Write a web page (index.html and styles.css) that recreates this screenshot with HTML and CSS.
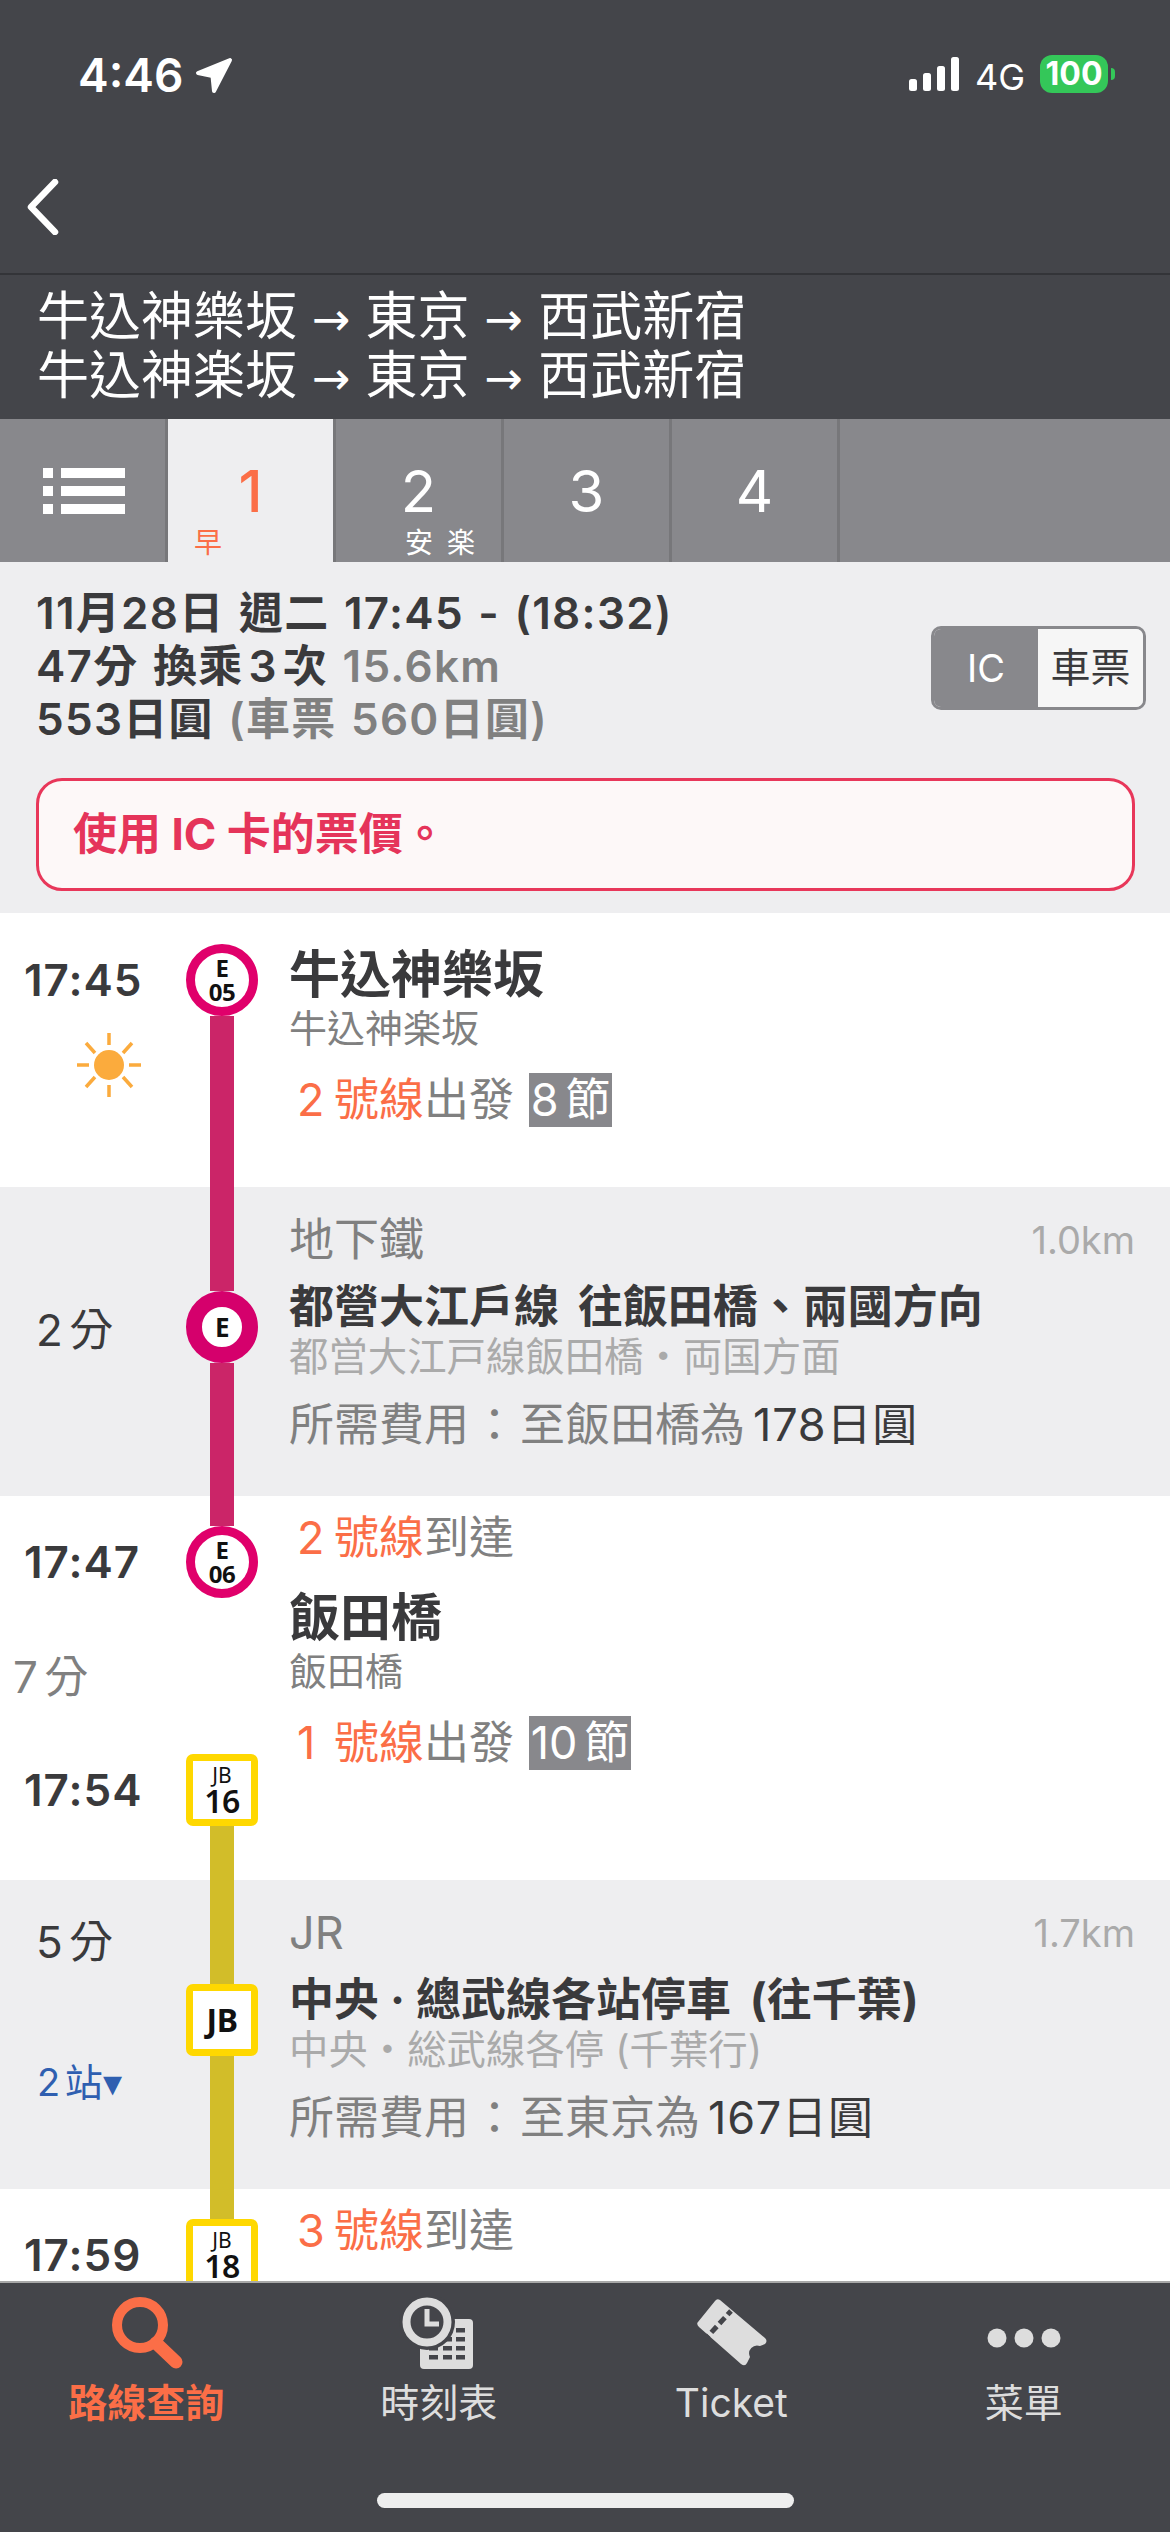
FILE: index.html
```html
<!DOCTYPE html>
<html lang="zh-Hant">
<head>
  <meta charset="UTF-8" />
  <title>路線查詢</title>
  <link rel="stylesheet" href="styles.css">
</head>
<body>
  <header class="top">
    <div class="status">
      <div class="status-time">
        <span>4:46</span>
        <svg class="loc-arrow" width="38" height="38" viewBox="0 0 38 38"><path d="M35 3L3 16L17.5 19L19 34Z" fill="#fff" stroke="#fff" stroke-width="4" stroke-linejoin="round"/></svg>
      </div>
      <div class="status-right">
        <svg width="50" height="34" viewBox="0 0 50 34"><rect x="0" y="22" width="8" height="12" rx="2.5" fill="#fff"/><rect x="14" y="16" width="8" height="18" rx="2.5" fill="#fff"/><rect x="28" y="9" width="8" height="25" rx="2.5" fill="#fff"/><rect x="42" y="0" width="8" height="34" rx="2.5" fill="#fff"/></svg>
        <span class="net">4G</span>
        <span class="battery">100</span>
        <span class="battery-nub"></span>
      </div>
    </div>
    <div class="nav">
      <svg width="40" height="56" viewBox="0 0 40 56"><path d="M31 3L7 28L31 53" fill="none" stroke="#fff" stroke-width="6.5" stroke-linecap="round" stroke-linejoin="round"/></svg>
    </div>
    <div class="route">
      <div>牛込神樂坂<span class="arrow">→</span>東京<span class="arrow">→</span>西武新宿</div>
      <div>牛込神楽坂<span class="arrow">→</span>東京<span class="arrow">→</span>西武新宿</div>
    </div>
  </header>

  <nav class="tabs">
    <div class="tab tab-list">
      <svg width="82" height="46" viewBox="0 0 82 46" fill="#fff"><rect width="10" height="10"/><rect x="18" width="64" height="10"/><rect y="18" width="10" height="10"/><rect x="18" y="18" width="64" height="10"/><rect y="36" width="10" height="10"/><rect x="18" y="36" width="64" height="10"/></svg>
    </div>
    <div class="tab active">
      <span class="tab-num">1</span>
      <span class="tab-note note-early">早</span>
    </div>
    <div class="tab">
      <span class="tab-num">2</span>
      <span class="tab-note note-easy">安 楽</span>
    </div>
    <div class="tab"><span class="tab-num">3</span></div>
    <div class="tab"><span class="tab-num">4</span></div>
    <div class="tab-rest"></div>
  </nav>

  <section class="summary">
    <div class="summary-top">
      <div class="summary-text">
        <div>11月28日 週二 17:45 - (18:32)</div>
        <div>47分 換乘<span class="num-gap">3</span>次 <span class="muted">15.6km</span></div>
        <div>553日圓 <span class="muted">(車票 560日圓)</span></div>
      </div>
      <div class="toggle">
        <span class="toggle-on">IC</span>
        <span class="toggle-off">車票</span>
      </div>
    </div>
    <div class="alert">使用 IC 卡的票價。</div>
  </section>

  <main class="timeline">
    <div class="row stop row-a">
      <div class="when">
        <div class="time time-first">17:45</div>
        <svg class="sun" width="64" height="64" viewBox="0 0 64 64">
          <circle cx="32" cy="32" r="15" fill="#fbab3d"/>
          <g stroke="#fbab3d" stroke-width="3.5">
            <path d="M32 0V12M32 52V64M0 32H12M52 32H64M9 10L18 20M55 10L46 20M9 54L18 44M55 54L46 44"/>
          </g>
        </svg>
      </div>
      <div class="track">
        <div class="badge round first-badge"><b>E</b><b>05</b></div>
        <div class="seg pink grow"></div>
      </div>
      <div class="detail detail-first">
        <div class="name">牛込神樂坂</div>
        <div class="sub">牛込神楽坂</div>
        <div class="platform platform-dep"><span class="orange"><span class="no">2</span>號線</span>出發 <span class="cars">8 節</span></div>
      </div>
    </div>

    <div class="row ride">
      <div class="when">
        <div class="dur dur-mid">2 分</div>
      </div>
      <div class="track">
        <div class="seg pink seg-long"></div>
        <div class="badge round solid"><b>E</b></div>
        <div class="seg pink grow"></div>
      </div>
      <div class="detail detail-ride">
        <div class="carrier"><span>地下鐵</span><span class="km">1.0km</span></div>
        <div class="line-name">都營大江戶線 往飯田橋、兩國方向</div>
        <div class="line-sub">都営大江戸線飯田橋・両国方面</div>
        <div class="fare">所需費用<span class="colon">：</span>至飯田橋為<span class="dark">178日圓</span></div>
      </div>
    </div>

    <div class="row stop row-b">
      <div class="when">
        <div class="time time-arr">17:47</div>
        <div class="dur stay">7 分</div>
        <div class="time time-dep">17:54</div>
      </div>
      <div class="track">
        <div class="seg pink seg-short"></div>
        <div class="badge round"><b>E</b><b>06</b></div>
        <div class="grow"></div>
        <div class="badge square"><small>JB</small><b>16</b></div>
        <div class="seg yellow seg-tail"></div>
      </div>
      <div class="detail detail-stop">
        <div class="platform"><span class="orange"><span class="no">2</span>號線</span>到達</div>
        <div class="name name-mid">飯田橋</div>
        <div class="sub">飯田橋</div>
        <div class="platform platform-next"><span class="orange"><span class="no">1</span>號線</span>出發 <span class="cars">10 節</span></div>
      </div>
    </div>

    <div class="row ride">
      <div class="when">
        <div class="dur dur-top">5 分</div>
        <div class="stations">2 站<span class="caret">▾</span></div>
      </div>
      <div class="track">
        <div class="seg yellow seg-long"></div>
        <div class="badge square solid-sq"><b>JB</b></div>
        <div class="seg yellow grow"></div>
      </div>
      <div class="detail detail-ride">
        <div class="carrier"><span>JR</span><span class="km">1.7km</span></div>
        <div class="line-name">中央<span class="dot">·</span>總武線各站停車 (往千葉)</div>
        <div class="line-sub">中央・総武線各停 (千葉行)</div>
        <div class="fare">所需費用<span class="colon">：</span>至東京為<span class="dark">167日圓</span></div>
      </div>
    </div>

    <div class="row stop row-c">
      <div class="when">
        <div class="time time-last">17:59</div>
      </div>
      <div class="track">
        <div class="seg yellow seg-short"></div>
        <div class="badge square"><small>JB</small><b>18</b></div>
      </div>
      <div class="detail detail-stop">
        <div class="platform"><span class="orange"><span class="no">3</span>號線</span>到達</div>
      </div>
    </div>
  </main>

  <footer class="bottom">
    <div class="bottom-items">
      <div class="item current">
        <svg width="80" height="72" viewBox="0 0 80 72"><circle cx="34" cy="28" r="23" fill="none" stroke="#fb6e47" stroke-width="10"/><path d="M50 46L70 65" stroke="#fb6e47" stroke-width="13" stroke-linecap="round"/></svg>
        <span>路線查詢</span>
      </div>
      <div class="item">
        <svg width="80" height="72" viewBox="0 0 80 72">
          <rect x="21" y="22" width="53" height="50" rx="4" fill="#ddd"/>
          <g fill="#44454a">
            <rect x="57" y="31" width="9" height="4.5"/>
            <rect x="44" y="40" width="9" height="4.5"/><rect x="57" y="40" width="9" height="4.5"/>
            <rect x="30" y="49" width="9" height="4.5"/><rect x="44" y="49" width="9" height="4.5"/><rect x="57" y="49" width="9" height="4.5"/>
            <rect x="30" y="58" width="9" height="4.5"/><rect x="44" y="58" width="9" height="4.5"/><rect x="57" y="58" width="9" height="4.5"/>
            <circle cx="28" cy="25" r="28"/>
          </g>
          <circle cx="28" cy="25" r="20.5" fill="#44454a" stroke="#ddd" stroke-width="8"/>
          <path d="M28 12V27H40" fill="none" stroke="#ddd" stroke-width="5"/>
        </svg>
        <span>時刻表</span>
      </div>
      <div class="item">
        <svg width="80" height="72" viewBox="0 0 80 72">
          <path d="M24 4Q26 1 29 3L74 41Q77 44 74 47L69 49A8 8 0 0 0 59 60L56 66Q54 70 50 67L8 30Q5 27 7 25Z" fill="#ddd"/>
          <path d="M40 14L17 39" fill="none" stroke="#44454a" stroke-width="5" stroke-dasharray="5 4 8 4 8 4 8"/>
        </svg>
        <span>Ticket</span>
      </div>
      <div class="item">
        <svg width="80" height="72" viewBox="0 0 80 72" fill="#ddd"><circle cx="13" cy="41" r="9.5"/><circle cx="40" cy="41" r="9.5"/><circle cx="67" cy="41" r="9.5"/></svg>
        <span>菜單</span>
      </div>
    </div>
    <div class="home-bar"></div>
  </footer>
</body>
</html>
```

FILE: styles.css
```css
* {
  box-sizing: border-box;
}
html, body {
  margin: 0;
  height: 100%;
}
body {
  width: 1170px;
  height: 2532px;
  display: flex;
  flex-direction: column;
  overflow: hidden;
  font-family: Inter, "Noto Sans CJK TC", sans-serif;
  color: #3a3a3c;
  background: #fff;
}

/* top header */
.top {
  height: 419px;
  background: #44454a;
  color: #fff;
  flex: none;
}
.status {
  height: 120px;
  padding: 52px 55px 0 78px;
  display: flex;
  justify-content: space-between;
}
.status-time {
  display: flex;
  align-items: flex-start;
  gap: 12px;
  font-size: 46px;
  font-weight: 600;
  line-height: 46px;
}
.loc-arrow {
  margin-top: 5px;
}
.status-right {
  display: flex;
  align-items: flex-start;
  margin-top: 3px;
}
.status-right svg {
  margin-top: 2px;
}
.net {
  font-size: 36px;
  line-height: 36px;
  margin: 4px 15px 0 16px;
}
.battery {
  width: 68px;
  height: 38px;
  border-radius: 12px;
  background: #34c759;
  font-size: 32px;
  font-weight: 700;
  line-height: 38px;
  text-align: center;
}
.battery-nub {
  width: 4px;
  height: 12px;
  margin: 13px 0 0 3px;
  background: #34c759;
  border-radius: 0 6px 6px 0;
}
.nav {
  height: 155px;
  padding: 59px 0 0 24px;
  border-bottom: 2px solid #333438;
}
.route {
  padding: 12px 0 0 37px;
  font-size: 52px;
  line-height: 59px;
}
.arrow {
  font-family: "DejaVu Sans", sans-serif;
  font-size: 46px;
  line-height: 0;
  margin: 0 15px;
}

/* route tabs */
.tabs {
  height: 143px;
  display: flex;
  background: #88888c;
  flex: none;
}
.tab {
  width: 168px;
  height: 143px;
  border-right: 3px solid #77777a;
  color: #fff;
  text-align: center;
}
.tab-list {
  width: 168px;
  padding: 49px 42px 0 43px;
}
.tab-rest {
  flex: 1;
}
.tab.active {
  background: #eeeef0;
  color: #fb6e47;
  font-weight: 500;
}
.tab-num {
  display: block;
  font-size: 58px;
  line-height: 60px;
  margin-top: 42px;
}
.tab-note {
  display: block;
  font-size: 28px;
  font-weight: 400;
  line-height: 30px;
  margin-top: 7px;
  text-align: left;
}
.note-early {
  padding-left: 26px;
}
.note-easy {
  padding-left: 69px;
  word-spacing: 6px;
}

/* summary block */
.summary {
  height: 351px;
  padding: 25px 24px 0 36px;
  background: #eeeef0;
  flex: none;
}
.summary-top {
  display: flex;
  justify-content: space-between;
  align-items: flex-start;
}
.summary-text {
  font-size: 44px;
  font-weight: 600;
  line-height: 53px;
  letter-spacing: 1.3px;
  word-spacing: 2px;
}
.num-gap {
  margin: 0 5px;
}
.muted {
  color: #808080;
}
.toggle {
  display: flex;
  width: 215px;
  height: 84px;
  margin-top: 39px;
  border: 3px solid #88888c;
  border-radius: 10px;
  overflow: hidden;
  font-size: 38px;
  line-height: 78px;
  text-align: center;
}
.toggle-on {
  width: 104px;
  background: #88888c;
  color: #fff;
}
.toggle-off {
  flex: 1;
  background: #f6f6f6;
  font-size: 40px;
}
.alert {
  height: 113px;
  margin: 32px 11px 0 0;
  padding-left: 34px;
  border: 3px solid #e8375a;
  border-radius: 26px;
  background: #fdf8f8;
  color: #e5345a;
  font-size: 44px;
  font-weight: 700;
  line-height: 107px;
}

/* timeline */
.timeline {
  flex: 1;
  min-height: 0;
  overflow: hidden;
}
.row {
  display: grid;
  grid-template-columns: 186px 72px 1fr;
}
.row-a { height: 274px; }
.row-b { height: 384px; }
.row-c { height: 100px; }
.ride {
  height: 309px;
  background: #eeeef0;
}
.when {
  display: flex;
  flex-direction: column;
  align-items: flex-start;
}
.time {
  margin-left: 24px;
  font-size: 44px;
  font-weight: 600;
  line-height: 60px;
  letter-spacing: 1px;
}
.time-first { margin-top: 37px; }
.time-arr { margin-top: 36px; }
.time-dep { margin-top: 56px; }
.time-last { margin-top: 36px; }
.sun {
  margin: 23px 0 0 77px;
}
.dur {
  margin-left: 36px;
  font-size: 44px;
  line-height: 54px;
  word-spacing: -6px;
}
.dur-mid { margin-top: 116px; }
.dur-top { margin-top: 35px; }
.stay {
  margin: 58px 0 0 13px;
  color: #808080;
}
.stations {
  margin: 86px 0 0 37px;
  color: #2f5fb0;
  font-size: 38px;
  line-height: 54px;
  word-spacing: -6px;
}
.track {
  display: flex;
  flex-direction: column;
  align-items: center;
}
.seg {
  width: 24px;
  flex: none;
}
.grow { flex: 1; }
.pink { background: #cb2568; }
.yellow { background: #d2bd29; }
.seg-long { height: 104px; }
.seg-short { height: 30px; }
.seg-tail { height: 54px; }
.first-badge { margin-top: 31px; }
.badge {
  width: 72px;
  height: 72px;
  flex: none;
  display: flex;
  flex-direction: column;
  align-items: center;
  justify-content: center;
  background: #fff;
  color: #111;
  font-family: "Noto Sans", sans-serif;
  font-size: 24px;
  line-height: 24px;
}
.badge b {
  letter-spacing: -0.5px;
}
.round {
  border: 9px solid #e0006b;
  border-radius: 50%;
}
.round.solid {
  border-width: 16px;
  border-color: #d5006c;
  font-size: 26px;
}
.square {
  border: 7px solid #ffd800;
  border-radius: 7px;
}
.square small {
  font-size: 21px;
  line-height: 22px;
}
.square b {
  font-size: 32px;
  line-height: 30px;
  font-weight: 600;
}
.solid-sq b {
  font-weight: 700;
}
.detail {
  padding-left: 31px;
  min-width: 0;
}
.detail-first { padding-top: 32px; }
.detail-stop { padding-top: 14px; }
.detail-ride {
  padding-top: 28px;
  padding-right: 35px;
}
.name {
  font-size: 51px;
  font-weight: 700;
  line-height: 60px;
}
.name-mid {
  margin-top: 22px;
}
.sub {
  color: #808080;
  font-size: 38px;
  line-height: 46px;
}
.platform {
  padding-left: 8px;
  color: #808080;
  font-size: 45px;
  line-height: 56px;
}
.platform-dep { margin-top: 21px; }
.platform-next { margin-top: 21px; }
.no {
  display: inline-block;
  width: 37px;
}
.orange {
  color: #fb6e47;
}
.cars {
  display: inline-block;
  margin-left: 2px;
  padding: 0 2px;
  background: #88888c;
  color: #fff;
  line-height: 54px;
  word-spacing: -6px;
}
.carrier {
  display: flex;
  justify-content: space-between;
  align-items: center;
  color: #808080;
  font-size: 45px;
  line-height: 50px;
}
.km {
  color: #aaa;
  font-size: 38px;
}
.line-name {
  margin-top: 15px;
  font-size: 45px;
  font-weight: 700;
  line-height: 54px;
  white-space: nowrap;
  word-spacing: 8px;
}
.dot {
  margin: 0 11px;
}
.line-sub {
  color: #aaa;
  font-size: 39.4px;
  line-height: 46px;
  white-space: nowrap;
}
.fare {
  margin-top: 18px;
  color: #808080;
  font-size: 45px;
  line-height: 54px;
  white-space: nowrap;
}
.colon {
  margin: 0 3px;
}
.dark {
  margin-left: 8px;
  color: #3a3a3c;
  letter-spacing: 0.8px;
}

/* bottom bar */
.bottom {
  height: 251px;
  flex: none;
  display: flex;
  flex-direction: column;
  justify-content: space-between;
  background: #44454a;
  border-top: 2px solid #a8a8a8;
  color: #ddd;
}
.bottom-items {
  display: grid;
  grid-template-columns: repeat(4, 1fr);
  padding-top: 14px;
}
.item {
  display: flex;
  flex-direction: column;
  align-items: center;
  font-size: 39px;
  line-height: 50px;
}
.item span {
  margin-top: 9px;
}
.item.current {
  color: #fb6e47;
  font-weight: 700;
}
.home-bar {
  width: 417px;
  height: 15px;
  margin: 0 auto 24px;
  border-radius: 8px;
  background: #eee;
}
```
